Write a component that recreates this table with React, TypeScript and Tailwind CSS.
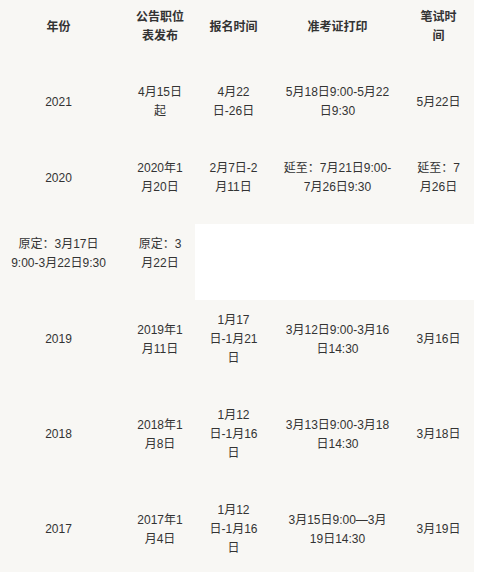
/**
 * 历年考试时间表：年份 / 公告职位表发布 / 报名时间 / 准考证打印 / 笔试时间。
 * Cells carry the warm off-white fill; the table itself stays white, so the
 * short "原定" row leaves a white gap where its missing cells would be.
 */

type Row = { key: string; cells: string[] };

const HEAD = ['年份', '公告职位表发布', '报名时间', '准考证打印', '笔试时间'];

const ROWS: Row[] = [
  { key: '2021', cells: ['2021', '4月15日起', '4月22日-26日', '5月18日9:00-5月22日9:30', '5月22日'] },
  {
    key: '2020',
    cells: ['2020', '2020年1月20日', '2月7日-2月11日', '延至：7月21日9:00-7月26日9:30', '延至：7月26日'],
  },
  { key: '2020-orig', cells: ['原定：3月17日9:00-3月22日9:30', '原定：3月22日'] },
  {
    key: '2019',
    cells: ['2019', '2019年1月11日', '1月17日-1月21日', '3月12日9:00-3月16日14:30', '3月16日'],
  },
  {
    key: '2018',
    cells: ['2018', '2018年1月8日', '1月12日-1月16日', '3月13日9:00-3月18日14:30', '3月18日'],
  },
  {
    key: '2017',
    cells: ['2017', '2017年1月4日', '1月12日-1月16日', '3月15日9:00—3月19日14:30', '3月19日'],
  },
];

// per-column horizontal padding, tuned so the text wraps where the source does
const COL_PAD = ['pl-[8px] pr-[16px]', 'px-[11px]', 'px-[12px]', 'px-[11px]', 'px-[12px]'];
const COL_W = ['w-[125px]', 'w-[70px]', 'w-[77px]', 'w-[131px]', 'w-[71px]'];

export default function App() {
  return (
    <div
      className="min-h-[572px] w-[487px] bg-white text-[12px] leading-[19px] text-[#333333]"
      style={{ fontFamily: '"Liberation Sans", "Noto Sans CJK SC", sans-serif' }}
    >
      <table className="w-[474px] table-fixed border-collapse">
        <colgroup>
          {COL_W.map((w, i) => (
            // biome-ignore lint/suspicious/noArrayIndexKey: fixed columns
            <col key={i} className={w} />
          ))}
        </colgroup>
        <thead>
          <tr>
            {HEAD.map((h, i) => (
              <th
                key={h}
                className={`bg-[#f8f7f4] pt-[8px] pb-[26px] text-center align-middle font-bold break-words ${COL_PAD[i]}`}
              >
                {h}
              </th>
            ))}
          </tr>
        </thead>
        <tbody>
          {ROWS.map((row) => (
            <tr key={row.key}>
              {row.cells.map((c, i) => (
                <td
                  // biome-ignore lint/suspicious/noArrayIndexKey: fixed columns
                  key={i}
                  className={`bg-[#f8f7f4] pt-[11px] pb-[27px] text-center align-middle break-words ${COL_PAD[i]}`}
                >
                  {c}
                </td>
              ))}
            </tr>
          ))}
        </tbody>
      </table>
    </div>
  );
}
